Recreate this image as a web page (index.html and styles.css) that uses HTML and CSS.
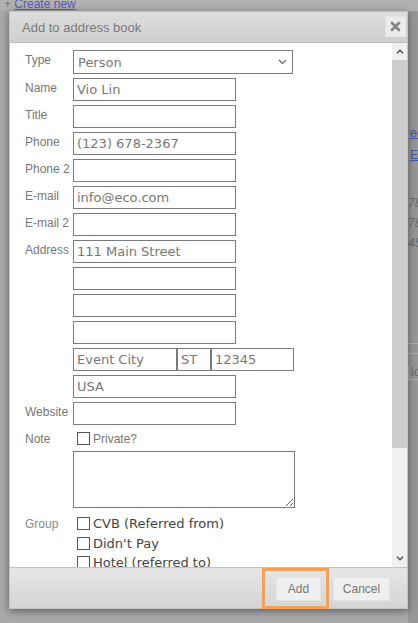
FILE: index.html
```html
<!DOCTYPE html>
<html>
<head>
<meta charset="utf-8">
<title>Add to address book</title>
<link rel="stylesheet" href="styles.css">
</head>
<body>
<div class="page">
  <div class="page-top"><div class="page-top-inner"><span class="plus">+</span> <a class="create">Create new</a></div></div>
  <div class="page-right">
    <a class="pr-link pr-1">ed</a>
    <a class="pr-link pr-2">Ed</a>
    <span class="pr-num pr-3">78</span>
    <span class="pr-num pr-4">78</span>
    <span class="pr-num pr-5">45</span>
    <span class="pr-line pr-6"></span>
    <span class="pr-line pr-7"></span>
    <span class="pr-box pr-8">lo</span>
  </div>
</div>

<div class="dialog">
  <div class="titlebar">
    <span class="title">Add to address book</span>
    <button class="close" type="button" aria-label="Close">
      <svg width="11" height="11" viewBox="0 0 11 11"><path d="M2 2 L9 9 M9 2 L2 9" stroke="#858585" stroke-width="2.8" stroke-linecap="round"/></svg>
    </button>
  </div>

  <div class="content">
    <div class="form">
      <span class="lbl">Type</span>
      <div class="select"><span>Person</span>
        <svg width="9" height="6" viewBox="0 0 9 6"><path d="M1 1 L4.5 4.5 L8 1" fill="none" stroke="#666" stroke-width="1.2"/></svg>
      </div>

      <span class="lbl">Name</span>
      <input class="inp" type="text" value="Vio Lin">

      <span class="lbl">Title</span>
      <input class="inp" type="text" value="">

      <span class="lbl">Phone</span>
      <input class="inp" type="text" value="(123) 678-2367">

      <span class="lbl">Phone 2</span>
      <input class="inp" type="text" value="">

      <span class="lbl">E-mail</span>
      <input class="inp" type="text" value="info@eco.com">

      <span class="lbl">E-mail 2</span>
      <input class="inp" type="text" value="">

      <span class="lbl">Address</span>
      <input class="inp" type="text" value="111 Main Street">

      <span class="lbl"></span>
      <input class="inp" type="text" value="">

      <span class="lbl"></span>
      <input class="inp" type="text" value="">

      <span class="lbl"></span>
      <input class="inp" type="text" value="">

      <span class="lbl"></span>
      <div class="city">
        <input class="inp inp-city" type="text" value="Event City">
        <input class="inp inp-st" type="text" value="ST">
        <input class="inp inp-zip" type="text" value="12345">
      </div>

      <span class="lbl"></span>
      <input class="inp" type="text" value="USA">

      <span class="lbl">Website</span>
      <input class="inp" type="text" value="">

      <span class="lbl">Note</span>
      <div class="note-cell"><span class="cb"></span><span class="private">Private?</span></div>

      <span class="lbl"></span>
      <textarea class="note"></textarea>

      <span class="lbl lbl-group">Group</span>
      <div class="groups">
        <div class="gitem"><span class="cb"></span><span>CVB (Referred from)</span></div>
        <div class="gitem"><span class="cb"></span><span>Didn't Pay</span></div>
        <div class="gitem"><span class="cb"></span><span>Hotel (referred to)</span></div>
      </div>
    </div>

    <div class="scrollbar">
      <div class="sb-btn">
        <svg width="8" height="5" viewBox="0 0 8 5"><path d="M1 4.2 L4 1.2 L7 4.2" fill="none" stroke="#505050" stroke-width="1.5"/></svg>
      </div>
      <div class="sb-thumb"></div>
      <div class="sb-track"></div>
      <div class="sb-btn">
        <svg width="8" height="5" viewBox="0 0 8 5"><path d="M1 0.8 L4 3.8 L7 0.8" fill="none" stroke="#505050" stroke-width="1.5"/></svg>
      </div>
    </div>
  </div>

  <div class="footer">
    <div class="hl"><button class="btn btn-add" type="button">Add</button></div>
    <button class="btn btn-cancel" type="button">Cancel</button>
  </div>
</div>
</body>
</html>
```

FILE: styles.css
```css
* { box-sizing: border-box; }

html, body {
  margin: 0;
  padding: 0;
}

body {
  width: 418px;
  height: 623px;
  overflow: hidden;
  position: relative;
  background: #a9a9a9;
  font-family: "Liberation Sans", Arial, sans-serif;
}

/* background page (dimmed) */
.page {
  height: 623px;
  display: flex;
  flex-direction: column;
}

.page-top {
  height: 11px;
  overflow: hidden;
  padding-left: 4px;
  font-size: 12px;
  line-height: 12px;
  background: #b1b1b1;
}

.page-top-inner {
  margin-top: -2px;
  white-space: nowrap;
}

.plus { color: #7a7a7a; }

.create {
  color: #5a5ab0;
  text-decoration: underline;
}

.page-right {
  flex: 1;
  margin-left: 408px;
  width: 10px;
  overflow: hidden;
  background: #979797;
  display: flex;
  flex-direction: column;
  font-size: 12px;
  line-height: 12px;
  white-space: nowrap;
}

.pr-link {
  color: #4556a6;
  text-decoration: underline;
  padding-left: 2px;
}

.pr-1 { margin-top: 116px; }
.pr-2 { margin-top: 10px; }

.pr-num {
  color: #6c6c6c;
  font-style: italic;
}

.pr-3 { margin-top: 36px; }
.pr-4 { margin-top: 8px; }
.pr-5 { margin-top: 8px; }

.pr-line {
  display: block;
  height: 1px;
  background: #b0b0b0;
}

.pr-6 { margin-top: 94px; }
.pr-7 { margin-top: 9px; }

.pr-box {
  margin-top: 12px;
  color: #6c6c6c;
  border-bottom: 1px solid #b0b0b0;
  border-left: 1px solid #b0b0b0;
  padding-left: 2px;
  height: 14px;
}

/* dialog */
.dialog {
  position: absolute;
  left: 9px;
  top: 11px;
  width: 399px;
  height: 598px;
  border: 1px solid #c4c4c4;
  background: #fff;
  box-shadow: 0 2px 8px rgba(0, 0, 0, 0.45);
  display: flex;
  flex-direction: column;
}

.titlebar {
  flex: none;
  height: 31px;
  border-bottom: 1px solid #bdbdbd;
  background: linear-gradient(#dddddd, #cfcfcf);
  display: flex;
  align-items: center;
  justify-content: space-between;
  padding: 0 1px 0 12px;
}

.title {
  font-size: 13px;
  color: #7a7a7a;
}

.close {
  width: 21px;
  height: 21px;
  margin: -2px 0 0 0;
  padding: 0;
  border: 1px solid #e4e4e4;
  background: #ececec;
  display: flex;
  align-items: center;
  justify-content: center;
}

.content {
  flex: 1;
  min-height: 0;
  display: flex;
  overflow: hidden;
}

.form {
  flex: 1;
  display: grid;
  grid-template-columns: 48px auto;
  justify-content: start;
  justify-items: start;
  align-content: start;
  row-gap: 4px;
  padding: 7px 0 0 15px;
}

.lbl {
  font-size: 12px;
  line-height: 16px;
  padding-top: 2px;
  color: #777;
  white-space: nowrap;
}

.inp {
  width: 163px;
  height: 23px;
  margin: 0;
  padding: 0 3px;
  border: 1px solid #7b7b7b;
  border-radius: 0;
  background: #fff;
  font-family: "DejaVu Sans", Verdana, sans-serif;
  font-size: 13px;
  color: #777;
  outline: none;
}

.select {
  width: 220px;
  height: 24px;
  border: 1px solid #7b7b7b;
  background: #fff;
  display: flex;
  align-items: center;
  justify-content: space-between;
  padding: 0 5px 0 4px;
  font-family: "DejaVu Sans", Verdana, sans-serif;
  font-size: 13px;
  color: #777;
}

.city {
  display: flex;
}

.inp-city { width: 104px; }
.inp-st { width: 34px; }
.inp-zip { width: 83px; }

.note-cell {
  height: 17px;
  display: flex;
  align-items: flex-end;
  padding-left: 4px;
  gap: 3px;
}

.cb {
  display: inline-block;
  flex: none;
  width: 13px;
  height: 13px;
  border: 1px solid #555;
  background: #fff;
}

.note-cell .cb { margin-bottom: 1px; }

.private {
  font-size: 12px;
  line-height: 14px;
  color: #777;
}

.note {
  width: 222px;
  height: 57px;
  margin: 0;
  padding: 2px;
  border: 1px solid #7b7b7b;
  border-radius: 0;
  resize: both;
  outline: none;
  font-family: "DejaVu Sans", Verdana, sans-serif;
  font-size: 13px;
}

.lbl-group {
  margin-top: 2px;
  color: #888;
}

.groups {
  margin-top: 2px;
  display: flex;
  flex-direction: column;
}

.gitem {
  height: 19.5px;
  display: flex;
  align-items: center;
  gap: 3px;
  padding-left: 4px;
  font-family: "DejaVu Sans", Verdana, sans-serif;
  font-size: 13px;
  color: #444;
  white-space: nowrap;
}

/* fake scrollbar */
.scrollbar {
  flex: none;
  width: 15px;
  display: flex;
  flex-direction: column;
  background: #f0f0f0;
}

.sb-btn {
  height: 17px;
  flex: none;
  display: flex;
  align-items: center;
  justify-content: center;
}

.sb-thumb {
  height: 388px;
  flex: none;
  background: #cdcdcd;
}

.sb-track { flex: 1; }

/* footer */
.footer {
  flex: none;
  height: 41px;
  border-top: 1px solid #c2c2c2;
  background: linear-gradient(#e6e6e6, #d5d5d5);
  display: flex;
  justify-content: flex-end;
  align-items: flex-start;
  padding-right: 17px;
}

.hl {
  height: 41px;
  border: 3px solid #f3a05a;
  padding: 6px 5px 0 11px;
  flex: none;
}

.btn {
  margin: 0;
  padding: 0;
  height: 24px;
  border: 1px solid #e3e3e3;
  border-radius: 0;
  background: #efefef;
  font-family: "Liberation Sans", Arial, sans-serif;
  font-size: 12px;
  color: #777;
}

.btn-add { width: 45px; }

.btn-cancel {
  width: 57px;
  margin-left: 4px;
  margin-top: 9px;
}
```
